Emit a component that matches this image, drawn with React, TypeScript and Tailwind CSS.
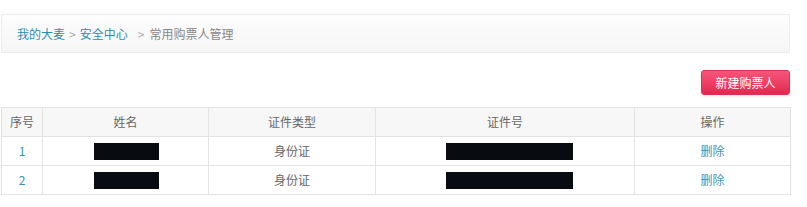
import React from "react";

const rows = [
  { no: 1, type: "身份证" },
  { no: 2, type: "身份证" },
];

export default function App() {
  const font = { fontFamily: '"Noto Sans CJK SC", "Noto Sans", sans-serif' };
  return (
    <div className="w-[807px] h-[207px] bg-white pl-px pt-[14px] text-[12px]" style={font}>
      {/* Breadcrumb */}
      <div className="w-[789px] h-[39px] border border-[#ececec] bg-gradient-to-b from-[#fdfdfd] to-[#f6f6f6] flex items-center pl-[15px] text-[12px] leading-none">
        <span className="text-[#2b8db0]">我的大麦</span>
        <span className="text-[#aaa] mx-[4px]">&gt;</span>
        <span className="text-[#2b8db0]">安全中心</span>
        <span className="text-[#aaa] ml-[10px] mr-[5px]">&gt;</span>
        <span className="text-[#888]">常用购票人管理</span>
      </div>

      {/* Action */}
      <div className="w-[789px] flex justify-end mt-[17px]">
        <button className="w-[89px] h-[25px] rounded-[3px] border border-[#e0305a] bg-gradient-to-b from-[#f5557a] to-[#e52550] text-white text-[12px] leading-none shadow-sm">
          新建购票人
        </button>
      </div>

      {/* Table */}
      <table className="mt-[12px] w-[789px] table-fixed border-collapse text-[12px] text-[#666]">
        <colgroup>
          <col className="w-[41px]" />
          <col className="w-[166px]" />
          <col className="w-[167px]" />
          <col className="w-[259px]" />
          <col className="w-[156px]" />
        </colgroup>
        <thead>
          <tr className="bg-[#f7f7f7] h-[29px]">
            {["序号", "姓名", "证件类型", "证件号", "操作"].map((h) => (
              <th key={h} className="border border-[#e3e3e3] font-normal text-center text-[#666]">
                {h}
              </th>
            ))}
          </tr>
        </thead>
        <tbody>
          {rows.map((r) => (
            <tr key={r.no} className="h-[29px]">
              <td className="border border-[#e3e3e3] text-center text-[#3a8fb7]">{r.no}</td>
              <td className="border border-[#e3e3e3]">
                <div className="ml-[51px] w-[65px] h-[17px] bg-[#080c12]" />
              </td>
              <td className="border border-[#e3e3e3] text-center text-[#666]">{r.type}</td>
              <td className="border border-[#e3e3e3]">
                <div className="ml-[70px] w-[127px] h-[17px] bg-[#080c12]" />
              </td>
              <td className="border border-[#e3e3e3] text-center text-[#4a90b0]">删除</td>
            </tr>
          ))}
        </tbody>
      </table>
    </div>
  );
}
